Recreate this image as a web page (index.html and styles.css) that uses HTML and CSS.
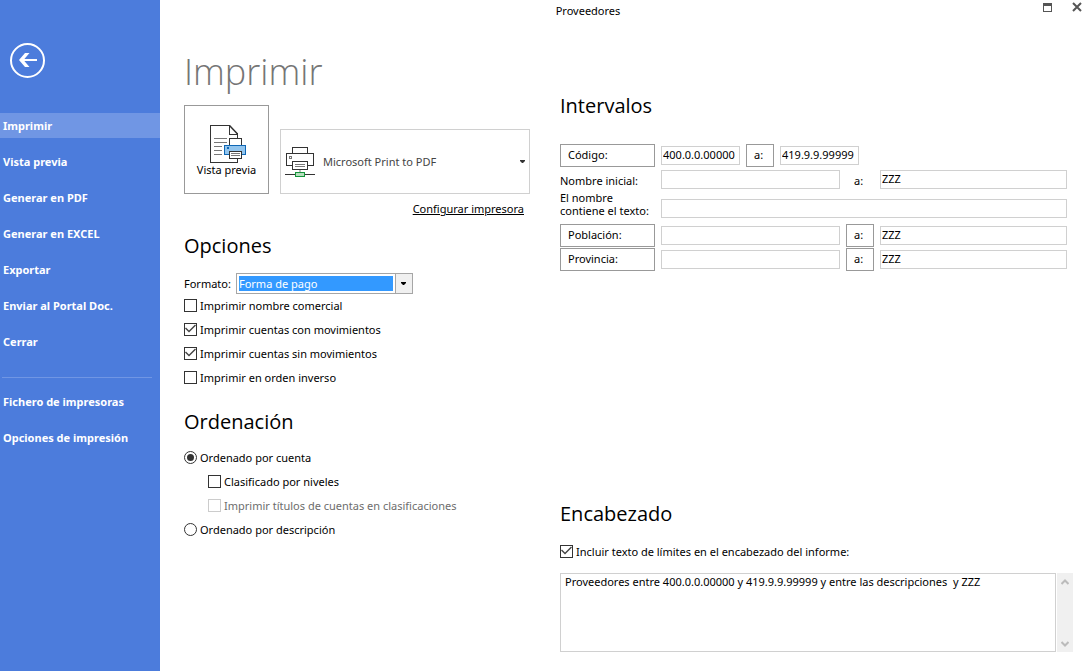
FILE: index.html
```html
<!DOCTYPE html>
<html lang="es">
<head>
<meta charset="utf-8">
<title>Proveedores</title>
<link rel="stylesheet" href="styles.css">
</head>
<body>
<div class="window">
  <aside class="sidebar">
    <button class="back" aria-label="Volver">
      <svg width="35" height="35" viewBox="0 0 35 35" fill="none" stroke="#fff"><circle cx="17.5" cy="17.5" r="16.5" stroke-width="2"/><path d="M10.500 17H27" stroke-width="2"/><path d="M9 17L15 10H19.500L13.500 17L19.500 24H15Z" fill="#fff" stroke="none"/></svg>
    </button>
    <nav class="menu">
      <a class="menu-item active" href="#">Imprimir</a>
      <a class="menu-item" href="#">Vista previa</a>
      <a class="menu-item" href="#">Generar en PDF</a>
      <a class="menu-item" href="#">Generar en EXCEL</a>
      <a class="menu-item" href="#">Exportar</a>
      <a class="menu-item" href="#">Enviar al Portal Doc.</a>
      <a class="menu-item" href="#">Cerrar</a>
      <hr class="menu-line">
      <a class="menu-item" href="#">Fichero de impresoras</a>
      <a class="menu-item" href="#">Opciones de impresión</a>
    </nav>
  </aside>
  <main class="main">
    <header class="titlebar">
      <div class="title">Proveedores</div>
      <div class="window-buttons">
        <button aria-label="Maximizar"><svg width="9" height="9" viewBox="0 0 9 9" shape-rendering="crispEdges"><path d="M0 0H9V9H0ZM1 3V8H8V3Z" fill="#555" fill-rule="evenodd"/></svg></button>
        <button aria-label="Cerrar ventana"><svg width="10" height="10" viewBox="0 0 10 10"><path d="M1 1L9 9M9 1L1 9" stroke="#555" stroke-width="2"/></svg></button>
      </div>
    </header>
    <div class="columns">
      <div class="left">
        <h1>Imprimir</h1>
        <div class="print-row">
          <button class="preview">
            <svg width="36" height="38" viewBox="0 0 36 38" shape-rendering="crispEdges" fill="none" stroke="#333">
              <path d="M.5 .5H19.500L27.500 8.500V37.500H.5Z" fill="#fff"/>
              <path d="M19.500 .5V9.500H27.500" fill="#fff"/><path d="M19.500 .5L27.500 9" shape-rendering="auto" stroke-width="1.500"/>
              <path d="M4 13.500H17M4 17.500H17M4 21.500H12M4 25.500H12M4 29.500H12" stroke="#777"/>
              <path d="M19.500 20V13.500H31.500V20" fill="#fff"/>
              <rect x="14.500" y="20.500" width="21" height="9" fill="#92c5ee" stroke="#0f67b5"/>
              <path d="M17 23H19" stroke="#0f67b5" stroke-width="2"/>
              <rect x="19.500" y="26.500" width="12" height="7" fill="#fff"/>
              <path d="M21 28.500H30M21 30.500H30" stroke="#777"/>
            </svg>
            <span>Vista previa</span>
          </button>
          <div class="printer">
            <svg width="30" height="30" viewBox="0 0 30 30" shape-rendering="crispEdges" fill="none" stroke="#333">
              <path d="M7.500 6V.5H22.500V6"/>
              <path d="M7 18.500H1.500V6.500H28.500V18.500H23"/>
              <rect x="4.500" y="9.500" width="2" height="2" stroke="#777"/>
              <rect x="7.500" y="14.500" width="15" height="8" fill="#fff"/>
              <path d="M10 17.500H20M10 19.500H20" stroke="#777"/>
              <path d="M15 23V25" stroke="#bbb" stroke-width="2"/>
              <path d="M0 27.500H30"/>
              <rect x="10.500" y="25.500" width="9" height="4" fill="#b5dfbd" stroke="#14943a"/>
            </svg>
            <select class="printer-select" aria-label="Impresora"><option>Microsoft Print to PDF</option></select>
            <svg class="caret" width="5" height="3" viewBox="0 0 5 3"><path d="M0 0H5V1L3 3H2L0 1Z" fill="#333"/></svg>
          </div>
        </div>
        <a class="setup" href="#">Configurar impresora</a>

        <h2 class="options-title">Opciones</h2>
        <div class="format">
          <label for="formato">Formato:</label>
          <div class="combo">
            <select id="formato"><option>Forma de pago</option></select>
            <span class="combo-arrow"><svg width="5" height="3" viewBox="0 0 5 3"><path d="M0 0H5V1L3 3H2L0 1Z" fill="#000"/></svg></span>
          </div>
        </div>
        <label class="check"><input type="checkbox">Imprimir nombre comercial</label>
        <label class="check"><input type="checkbox" checked>Imprimir cuentas con movimientos</label>
        <label class="check"><input type="checkbox" checked>Imprimir cuentas sin movimientos</label>
        <label class="check"><input type="checkbox">Imprimir en orden inverso</label>

        <h2 class="order-title">Ordenación</h2>
        <label class="check"><input type="radio" name="orden" checked>Ordenado por cuenta</label>
        <label class="check nested"><input type="checkbox">Clasificado por niveles</label>
        <label class="check nested disabled"><input type="checkbox" disabled>Imprimir títulos de cuentas en clasificaciones</label>
        <label class="check"><input type="radio" name="orden">Ordenado por descripción</label>
      </div>

      <div class="right">
        <h2 class="ranges-title">Intervalos</h2>
        <div class="ranges">
          <button class="box">Código:</button>
          <div class="code-range">
            <input type="text" value="400.0.0.00000" aria-label="Código desde">
            <button class="box">a:</button>
            <input type="text" value="419.9.9.99999" aria-label="Código hasta">
          </div>
          <label class="plain" for="nombre">Nombre inicial:</label>
          <input id="nombre" type="text">
          <label class="plain to" for="nombre-a">a:</label>
          <input id="nombre-a" type="text" value="ZZZ">
          <label class="two-lines" for="contiene">El nombre<br>contiene el texto:</label>
          <input class="wide" id="contiene" type="text">
          <button class="box">Población:</button>
          <input type="text" aria-label="Población desde">
          <button class="box">a:</button>
          <input type="text" value="ZZZ" aria-label="Población hasta">
          <button class="box">Provincia:</button>
          <input type="text" aria-label="Provincia desde">
          <button class="box">a:</button>
          <input type="text" value="ZZZ" aria-label="Provincia hasta">
        </div>

        <section class="heading">
          <h2>Encabezado</h2>
          <label class="check"><input type="checkbox" checked>Incluir texto de límites en el encabezado del informe:</label>
          <div class="memo">
            <textarea aria-label="Texto del encabezado">Proveedores entre 400.0.0.00000 y 419.9.9.99999 y entre las descripciones  y ZZZ</textarea>
            <div class="scroll">
              <button aria-label="Subir"><svg width="8" height="6" viewBox="0 0 8 6"><path d="M.5 5L4 1.500L7.500 5" fill="none" stroke="#bbb" stroke-width="2"/></svg></button>
              <button aria-label="Bajar"><svg width="8" height="6" viewBox="0 0 8 6"><path d="M.5 1L4 4.500L7.500 1" fill="none" stroke="#bbb" stroke-width="2"/></svg></button>
            </div>
          </div>
        </section>
      </div>
    </div>
  </main>
</div>
</body>
</html>
```
FILE: styles.css
```css
* { box-sizing: border-box; }
body {
  margin: 0;
  background: #fff;
  color: #000;
  font: 11px/14px "Noto Sans", "Open Sans", sans-serif;
}
button, input, select, textarea { font: inherit; color: inherit; border-radius: 0; margin: 0; }
button { background: none; border: 0; padding: 0; }
svg { display: block; flex: none; }

.window { display: flex; min-height: 100vh; }

.sidebar { width: 160px; flex: none; background: #4c7cdc; color: #fff; }
.back { display: block; margin: 43px 0 35px 10px; }
.menu { display: flex; flex-direction: column; gap: 11px; }
.menu-item {
  padding: 0 3px;
  line-height: 25px;
  font-weight: 700;
  color: #fff;
  text-decoration: none;
}
.menu-item.active { background: #7096e4; }
.menu-line { width: 150px; height: 1px; margin: 12px 0 0 2px; border: 0; background: #7096e4; }

.main { flex: 1; display: flex; flex-direction: column; min-width: 0; }
.titlebar { display: flex; height: 22px; }
.title { flex: 1; text-align: center; line-height: 22px; }
.window-buttons { width: 72px; display: flex; justify-content: flex-end; gap: 20px; padding: 2px 6px 0 0; }
.window-buttons button { height: 10px; }

.columns { flex: 1; display: grid; grid-template-columns: 346px 1fr; column-gap: 30px; padding: 0 15px 19px 24px; }

h1 { margin: 22px 0 6px; font: 300 36px/55px "Open Sans", sans-serif; color: #757575; }
h2 { margin: 0; font: 400 20px/28px "Open Sans", sans-serif; }

.print-row { display: flex; align-items: flex-end; gap: 11px; }
.preview {
  width: 85px;
  height: 89px;
  border: 1px solid #999;
  display: flex;
  flex-direction: column;
  align-items: center;
  padding-top: 19px;
}
.preview svg { margin-left: 2px; }
.printer { flex: 1; height: 65px; border: 1px solid #d0d0d0; display: flex; align-items: center; padding: 0 4px; }
.printer-select { flex: 1; margin-left: 8px; padding: 0; border: 0; background: none; appearance: none; color: #444; }
.setup { display: block; margin: 7px 6px 0 0; text-align: right; color: #000; line-height: 16px; }

.options-title { margin-top: 15px; }
.format { display: flex; align-items: center; gap: 5px; margin: 13px 0 0; }
.combo { width: 177px; height: 21px; border: 1px solid #a6a6a6; display: flex; }
.combo select { flex: 1; margin: 2px; padding: 0; border: 0; background: #3399ff; color: #fff; appearance: none; line-height: 15px; }
.combo-arrow { width: 17px; background: #f0f0f0; border-left: 1px solid #a6a6a6; display: grid; place-items: center; }

.check { display: flex; align-items: center; gap: 3px; height: 24px; }
.check.nested { margin-left: 24px; }
.check.disabled { color: #6d6d6d; }
.check input {
  appearance: none;
  width: 13px;
  height: 13px;
  margin-bottom: 2px;
  flex: none;
  border: 1px solid #333;
  background: #fff;
  display: grid;
  place-items: center;
}
.check input:disabled { border-color: #ccc; }
.check input[type="radio"] { border-radius: 50%; }
.check input[type="radio"]:checked::before { content: ""; width: 7px; height: 7px; border-radius: 50%; background: #333; }
.check input[type="checkbox"]:checked::before {
  content: "";
  width: 11px;
  height: 11px;
  background: #444;
  clip-path: polygon(0 5px, 1px 4px, 4px 7px, 10px 1px, 11px 2px, 4px 9px);
}
.order-title { margin: 18px 0 10px; }

.right { display: flex; flex-direction: column; }
.ranges-title { margin: 70px 0 23px; }
.ranges {
  display: grid;
  grid-template-columns: 95px 179fr 28px 187fr;
  grid-template-rows: 24px 24px 32px 24px 24px;
  column-gap: 6px;
  align-items: center;
  padding-right: 6px;
}
.ranges input { width: 100%; min-width: 0; height: 19px; padding: 0 1px 2px; border: 1px solid #d0d0d0; }
.ranges .code-range { grid-column: 2 / -1; display: flex; align-items: center; gap: 6px; }
.ranges .code-range input { width: 79px; }
.code-range .box { width: 28px; }
.box { height: 23px; border: 1px solid #999; padding: 0 7px; text-align: left; }
.plain { padding-top: 3px; }
.to { padding-left: 8px; }
.two-lines { align-self: start; line-height: 13px; white-space: nowrap; }
.ranges .wide { grid-column: 2 / -1; align-self: end; margin-bottom: 5px; }

.heading { margin-top: auto; }
.heading .check { margin: 12px 0 9px; }
.memo { display: flex; gap: 1px; height: 79px; }
.memo textarea { flex: 1; resize: none; border: 1px solid #d0d0d0; padding: 1px 4px; outline: 0; }
.scroll { width: 16px; background: #f0f0f0; display: flex; flex-direction: column; justify-content: space-between; align-items: center; padding: 6px 0 5px; }
```
